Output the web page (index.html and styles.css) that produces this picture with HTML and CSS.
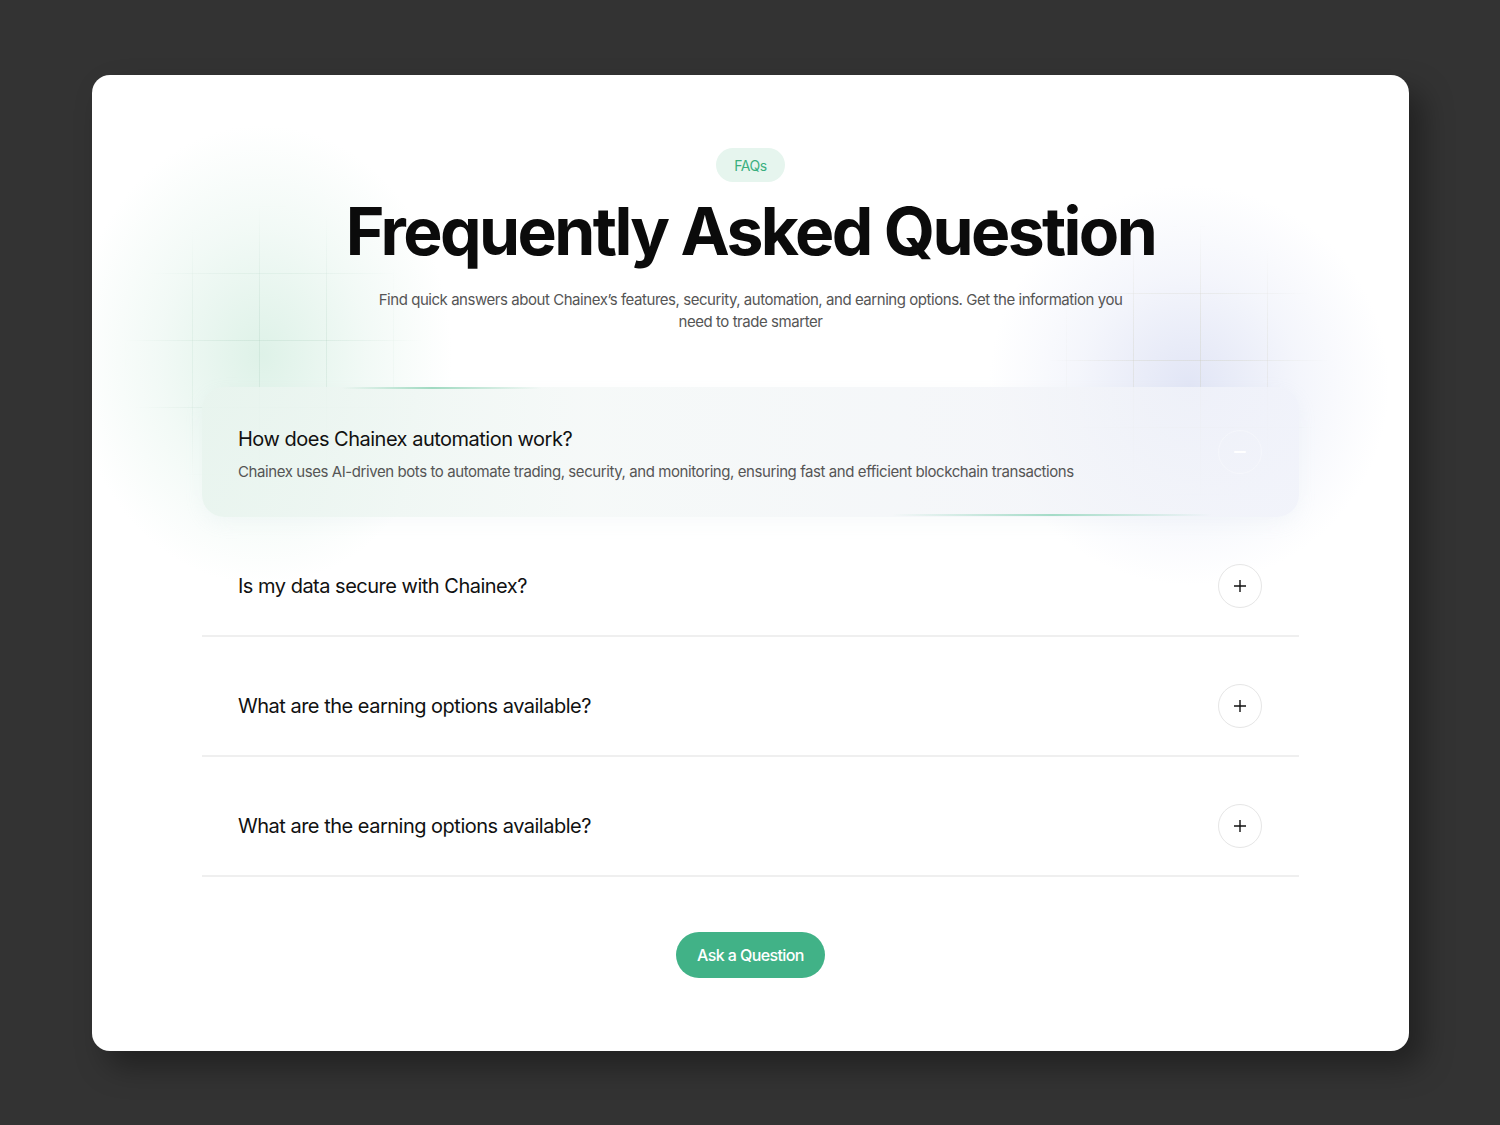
FILE: index.html
```html
<!DOCTYPE html>
<html lang="en">
<head>
<meta charset="utf-8">
<title>FAQs — Chainex</title>
<link rel="stylesheet" href="styles.css">
</head>
<body>
<main class="stage">
  <section class="faq-card">
    <div class="glow glow-green"></div>
    <div class="glow glow-blue"></div>
    <div class="grid grid-left"></div>
    <div class="grid grid-right"></div>

    <header class="faq-head">
      <span class="pill">FAQs</span>
      <h1 class="title">Frequently Asked Question</h1>
      <p class="lead">Find quick answers about Chainex’s features, security, automation, and earning options. Get the information you need to trade smarter</p>
    </header>

    <div class="faq-list">
      <article class="faq-item is-open">
        <div class="item-text">
          <h3 class="question">How does Chainex automation work?</h3>
          <p class="answer">Chainex uses AI-driven bots to automate trading, security, and monitoring, ensuring fast and efficient blockchain transactions</p>
        </div>
        <span class="toggle toggle-open"><span class="minus"></span></span>
      </article>

      <article class="faq-item">
        <div class="item-text">
          <h3 class="question">Is my data secure with Chainex?</h3>
        </div>
        <span class="toggle">
          <svg viewBox="0 0 16 16" width="16" height="16"><path d="M8 2v12M2 8h12" stroke="#111" stroke-width="1.4" fill="none"/></svg>
        </span>
      </article>

      <article class="faq-item">
        <div class="item-text">
          <h3 class="question">What are the earning options available?</h3>
        </div>
        <span class="toggle">
          <svg viewBox="0 0 16 16" width="16" height="16"><path d="M8 2v12M2 8h12" stroke="#111" stroke-width="1.4" fill="none"/></svg>
        </span>
      </article>

      <article class="faq-item">
        <div class="item-text">
          <h3 class="question">What are the earning options available?</h3>
        </div>
        <span class="toggle">
          <svg viewBox="0 0 16 16" width="16" height="16"><path d="M8 2v12M2 8h12" stroke="#111" stroke-width="1.4" fill="none"/></svg>
        </span>
      </article>
    </div>

    <div class="cta-row">
      <a class="cta" href="#">Ask a Question</a>
    </div>
  </section>
</main>
</body>
</html>
```

FILE: styles.css
```css
* { box-sizing: border-box; }

html, body {
  margin: 0;
  padding: 0;
  background: #333333;
}

body {
  font-family: Inter, "Noto Sans", "Liberation Sans", sans-serif;
  color: #111;
  -webkit-font-smoothing: antialiased;
}

.stage {
  padding: 75px 91px 75px 92px;
}

.faq-card {
  position: relative;
  overflow: hidden;
  background: #ffffff;
  border-radius: 18px;
  padding: 73px 110px 73px 110px;
  box-shadow: 14px 16px 30px rgba(0, 0, 0, 0.35);
}

/* soft colour blobs behind the header */
.glow {
  position: absolute;
  border-radius: 50%;
  pointer-events: none;
}
.glow-green {
  left: -20px;
  top: 50px;
  width: 380px;
  height: 460px;
  background: radial-gradient(closest-side, rgba(208, 236, 222, 0.7), rgba(226, 243, 235, 0.45) 55%, rgba(255, 255, 255, 0) 100%);
}
.glow-blue {
  right: 20px;
  top: 110px;
  width: 400px;
  height: 400px;
  background: radial-gradient(closest-side, rgba(224, 228, 245, 0.95), rgba(235, 238, 249, 0.55) 55%, rgba(255, 255, 255, 0) 100%);
}

/* faint square grid inside the blobs */
.grid {
  position: absolute;
  pointer-events: none;
  background-image:
    linear-gradient(to right, rgba(160, 200, 180, 0.22) 1px, transparent 1px),
    linear-gradient(to bottom, rgba(160, 200, 180, 0.22) 1px, transparent 1px);
  background-size: 67px 67px;
}
.grid-left {
  left: 32px;
  top: 130px;
  width: 300px;
  height: 300px;
  background-position: 68px 68px;
  -webkit-mask-image: radial-gradient(closest-side, #000 30%, transparent 100%);
  mask-image: radial-gradient(closest-side, #000 30%, transparent 100%);
}
.grid-right {
  right: 80px;
  top: 150px;
  width: 280px;
  height: 280px;
  background-image:
    linear-gradient(to right, rgba(200, 200, 180, 0.3) 1px, transparent 1px),
    linear-gradient(to bottom, rgba(200, 200, 180, 0.3) 1px, transparent 1px);
  background-position: 17px 1px;
  -webkit-mask-image: radial-gradient(closest-side, #000 30%, transparent 100%);
  mask-image: radial-gradient(closest-side, #000 30%, transparent 100%);
}

.faq-head {
  position: relative;
  display: flex;
  flex-direction: column;
  align-items: center;
  text-align: center;
}

.pill {
  display: inline-flex;
  align-items: center;
  justify-content: center;
  height: 34px;
  padding: 0 18px;
  border-radius: 17px;
  background: #e6f5ee;
  color: #3aaf7f;
  font-size: 14px;
  letter-spacing: -0.4px;
}

.title {
  margin: 10px 0 0;
  font-size: 66px;
  line-height: 79px;
  font-weight: 700;
  letter-spacing: -2.6px;
  color: #0b0b0b;
}

.lead {
  margin: 18px 0 0;
  max-width: 770px;
  font-size: 15px;
  line-height: 22px;
  color: #555;
  letter-spacing: -0.45px;
}

.faq-list {
  position: relative;
  margin-top: 54px;
  display: flex;
  flex-direction: column;
}

.faq-item {
  display: flex;
  align-items: center;
  justify-content: space-between;
  padding: 20px 37px 0 36px;
  height: 120px;
  border-bottom: 2px solid #efefef;
}

.faq-item.is-open {
  position: relative;
  height: 130px;
  padding-top: 4px;
  border-bottom: none;
  border-radius: 22px;
  background: linear-gradient(90deg, rgba(232, 244, 238, 0.9) 0%, rgba(244, 248, 247, 0.85) 35%, rgba(242, 244, 248, 0.8) 75%, rgba(240, 242, 250, 0.85) 100%);
  box-shadow: 0 6px 18px rgba(200, 210, 220, 0.12);
}
.faq-item.is-open .toggle {
  margin-top: -4px;
}
.faq-item.is-open::before,
.faq-item.is-open::after {
  content: "";
  position: absolute;
  height: 2px;
  border-radius: 1px;
}
.faq-item.is-open::before {
  top: 0;
  left: 140px;
  width: 200px;
  background: linear-gradient(90deg, rgba(140, 210, 180, 0), rgba(140, 210, 180, 0.8) 45%, rgba(140, 210, 180, 0));
}
.faq-item.is-open::after {
  bottom: 1px;
  left: 690px;
  width: 320px;
  background: linear-gradient(90deg, rgba(150, 215, 190, 0), rgba(150, 215, 190, 0.85) 50%, rgba(150, 215, 190, 0));
}

.item-text {
  display: flex;
  flex-direction: column;
}

.question {
  margin: 0;
  font-size: 20px;
  line-height: 26px;
  font-weight: 400;
  letter-spacing: -0.5px;
  color: #111;
}

.answer {
  margin: 10px 0 0;
  font-size: 15px;
  line-height: 20px;
  color: #555;
  letter-spacing: -0.42px;
}

.toggle {
  display: inline-flex;
  align-items: center;
  justify-content: center;
  width: 44px;
  height: 44px;
  flex: 0 0 44px;
  border-radius: 50%;
  border: 1px solid #e6e6e6;
  background: #fff;
}

.toggle-open {
  border-color: rgba(255, 255, 255, 0.3);
  background: transparent;
}
.minus {
  display: block;
  width: 12px;
  height: 2px;
  border-radius: 1px;
  background: #fff;
}

.cta-row {
  display: flex;
  justify-content: center;
  margin-top: 55px;
}

.cta {
  display: inline-flex;
  align-items: center;
  justify-content: center;
  height: 46px;
  padding: 0 21px;
  border-radius: 23px;
  background: #41b287;
  color: #fff;
  text-decoration: none;
  font-size: 16px;
  font-weight: 500;
  letter-spacing: -0.6px;
}
```
